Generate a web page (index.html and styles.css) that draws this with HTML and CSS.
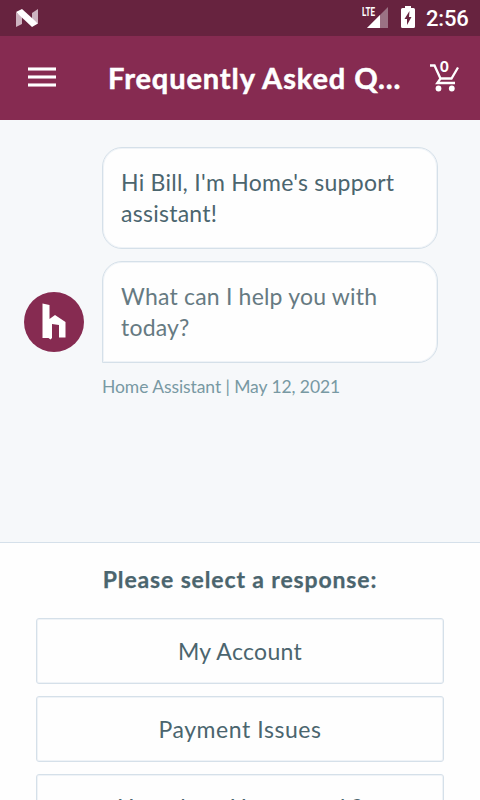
FILE: index.html
```html
<!DOCTYPE html>
<html lang="en">
<head>
<meta charset="utf-8">
<title>Frequently Asked Questions</title>
<link rel="stylesheet" href="styles.css">
</head>
<body>
<div class="status-bar">
  <svg class="nougat" width="22" height="18" viewBox="0 0 22 18"><path fill="#cdb3c0" d="M0 3.500 6 7v8L0 18zM16 4l6-4v14.500l-6-4z"/><path fill="#fff" d="M0 3 6 0l16 14.500-6 3.500z"/></svg>
  <div class="signal"><span class="lte">LTE</span><svg width="22" height="21" viewBox="0 0 22 21"><path fill="#9b7284" d="M22 0v21H1z"/><path fill="#fff" d="M14 8v13H1z"/></svg></div>
  <svg class="battery" width="14" height="22" viewBox="0 0 14 22"><path fill="#fff" d="M4 0h6v2h2.500Q14 2 14 3.500v17q0 1.500-1.500 1.500h-11Q0 22 0 20.500v-17Q0 2 1.500 2H4z"/><path fill="#67233f" d="M8.500 5 3.500 13H6v6l4.500-8H8z"/></svg>
  <span class="clock">2:56</span>
</div>
<header class="app-bar">
  <button class="menu" aria-label="Menu"><i></i><i></i><i></i></button>
  <h1>Frequently Asked Q...</h1>
  <div class="cart"><svg width="30" height="32" viewBox="0 0 30 32"><path fill="none" stroke="#fff" stroke-width="2.300" d="M0 5.500h4.500l6 13h11L28 7.500M10.500 18.500 7.300 23H25"/><circle fill="#fff" cx="8.500" cy="28.500" r="2.900"/><circle fill="#fff" cx="21.800" cy="28.500" r="2.900"/></svg><span class="count">0</span></div>
</header>
<main class="chat">
  <div class="message"><p class="bubble first">Hi Bill, I'm Home's support<br>assistant!</p></div>
  <div class="message">
    <svg class="avatar" width="60" height="60" viewBox="0 0 60 60"><circle fill="#862b51" cx="30" cy="30" r="30"/><path fill="#fff" d="M18.500 11.500 25.500 13v14l5.500-4L41.500 30v15.500h-6.500V33l-7-1v14l-1.500 1.500-2-1.500h-6z"/></svg>
    <p class="bubble last">What can I help you with<br>today?</p>
  </div>
  <p class="meta">Home Assistant | May 12, 2021</p>
</main>
<section class="responses">
  <h2>Please select a response:</h2>
  <button class="option account">My Account</button>
  <button class="option payment">Payment Issues</button>
  <button class="option how">How does Home work?</button>
</section>
</body>
</html>
```
FILE: styles.css
```css
* { box-sizing: border-box; }
body { margin: 0; width: 480px; height: 800px; overflow: hidden; display: flex; flex-direction: column; background: #fefefe; font-family: Lato, "Liberation Sans", sans-serif; color: #4b656e; }
h1, h2, p { margin: 0; }
button { font: inherit; color: inherit; padding: 0; border: 0; background: none; }
svg { display: block; flex: none; }
.status-bar { height: 36px; flex: none; display: flex; background: #67233f; color: #fff; padding-left: 16px; }
.nougat { margin-top: 9px; }
.signal { position: relative; margin: 7px 0 0 328px; }
.lte { position: absolute; left: -4px; top: -1px; font: bold 13px/12px Roboto, sans-serif; transform: scaleX(.62); transform-origin: left; }
.battery { margin: 6px 0 0 13px; }
.clock { margin: 5px 0 0 11px; font: 500 22px/28px Roboto, sans-serif; letter-spacing: -.2px; }
.app-bar { height: 84px; flex: none; display: flex; background: #862b51; color: #fff; }
.menu { width: 28px; margin: 31px 0 0 28px; display: flex; flex-direction: column; gap: 4px; }
.menu i { display: block; height: 4px; background: #fff; border-bottom: 1px solid #c99db0; border-top: 1px solid #c99db0; }
h1 { width: 322px; margin-left: 52px; font-size: 29px; line-height: 84px; font-weight: 700; white-space: nowrap; letter-spacing: .9px; -webkit-text-stroke: .5px; }
.cart { position: relative; margin-top: 24px; height: 32px; }
.count { position: absolute; left: 10px; top: -2px; font: 900 15px/16px Lato, sans-serif; }
.chat { height: 422px; flex: none; padding-top: 27px; background: #f6f8fa; }
.message { display: flex; align-items: flex-end; justify-content: flex-end; padding-right: 42px; margin-bottom: 12px; }
.avatar { margin: 0 18px 11px 0; }
.bubble { width: 336px; height: 102px; padding: 19px 18px; border: 1px solid #d5e0e9; box-shadow: inset 0 0 0 1px #eff3f7; border-radius: 20px; background: #fefefe; font-size: 23px; line-height: 31px; white-space: nowrap; }
.first { letter-spacing: .26px; }
.last { letter-spacing: .2px; border-bottom-left-radius: 0; color: #667a82; }
.meta { margin: -1px 0 0 102px; font-size: 17.5px; letter-spacing: -.08px; line-height: 26px; color: #7899a3; white-space: nowrap; }
.responses { flex: 1; min-height: 0; border-top: 1px solid #d5e0ea; padding: 18px 36px 0; display: flex; flex-direction: column; }
h2 { font-size: 23px; line-height: 36px; font-weight: 700; text-align: center; margin-bottom: 21px; letter-spacing: .86px; -webkit-text-stroke: .25px; }
.option { height: 66px; flex: none; margin-bottom: 12px; border: 1px solid #d5e0e9; box-shadow: inset 0 0 0 1px #eff3f7; border-radius: 3px; font-size: 23px; line-height: 62px; }
.account { letter-spacing: .3px; }
.payment { letter-spacing: .55px; }
.how { letter-spacing: .55px; }
```
